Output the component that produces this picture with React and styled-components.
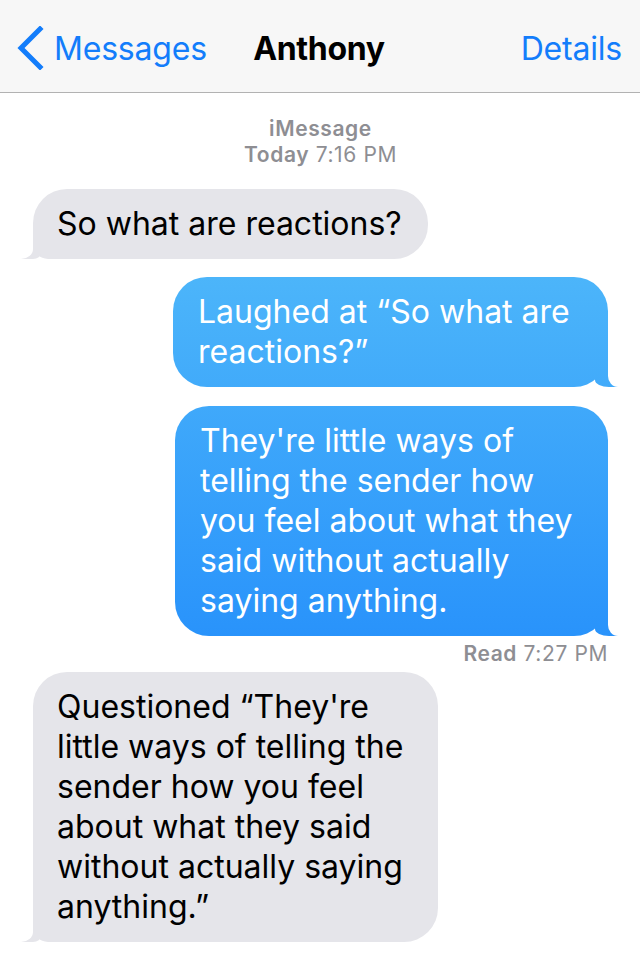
import styled, { createGlobalStyle, css } from "styled-components";

const GlobalStyle = createGlobalStyle`
  html, body {
    margin: 0;
    padding: 0;
    background: #ffffff;
  }
  body {
    font-family: Inter, "Noto Sans", "Liberation Sans", sans-serif;
    -webkit-font-smoothing: antialiased;
  }
`;

const Screen = styled.div`
  width: 640px;
  min-height: 977px;
  background: #ffffff;
  overflow: hidden;
`;

const NavBar = styled.div`
  height: 93px;
  display: grid;
  grid-template-columns: 1fr auto 1fr;
  align-items: center;
  padding: 4px 18px 0 16px;
  box-sizing: border-box;
  background: #f7f7f7;
  border-bottom: 1px solid #b2b2b2;
`;

const BackButton = styled.div`
  display: flex;
  align-items: center;
  gap: 10px;
  color: #137dfb;
  font-size: 32px;
  letter-spacing: -0.2px;
`;

const Title = styled.div`
  font-size: 32px;
  font-weight: 700;
  color: #000;
  letter-spacing: -0.3px;
`;

const NavAction = styled.div`
  justify-self: end;
  color: #137dfb;
  font-size: 32px;
  letter-spacing: -0.2px;
`;

const Thread = styled.div`
  display: flex;
  flex-direction: column;
  padding: 23px 32px 0 33px;
`;

const Meta = styled.div`
  color: #8e8e93;
  font-size: 21px;
  line-height: 26px;
  letter-spacing: 0.6px;
  text-align: ${(p) => (p.$right ? "right" : "center")};
  margin: ${(p) => p.$margin || "0"};
`;

const Strong = styled.span`
  font-weight: 600;
`;

const blueFill = css`
  background: linear-gradient(
    to bottom,
    #5bbff9 0px,
    #4cb5fa 277px,
    #2993fb 636px,
    #1f8cfb 977px
  );
  background-attachment: fixed;
  color: #ffffff;
`;

const grayFill = css`
  background: #e5e5ea;
  color: #000000;
`;

const sentTail = css`
  border-radius: 34px;

  &::before {
    right: -10px;
    width: 23px;
    height: 34px;
    border-bottom-left-radius: 14px 7px;
  }

  &::after {
    right: -16px;
    width: 16px;
    height: 38px;
    border-bottom-left-radius: 10px 11px;
  }
`;

const receivedTail = css`
  border-radius: 34px 34px 34px 15px;

  &::before {
    left: -12px;
    width: 20px;
    height: 26px;
    border-bottom-right-radius: 8px 6px;
  }

  &::after {
    left: -17px;
    width: 17px;
    height: 30px;
    border-bottom-right-radius: 12px 10px;
  }
`;

const Bubble = styled.div`
  position: relative;
  box-sizing: border-box;
  width: ${(p) => p.$w}px;
  padding: 15px 20px 15px ${(p) => (p.$sent ? 25 : 24)}px;
  font-size: 32px;
  line-height: 40px;
  align-self: ${(p) => (p.$sent ? "flex-end" : "flex-start")};
  margin-top: ${(p) => p.$top || 0}px;
  ${(p) => (p.$sent ? blueFill : grayFill)}

  &::before {
    content: "";
    position: absolute;
    bottom: 0;
    background: inherit;
  }

  &::after {
    content: "";
    position: absolute;
    bottom: 0;
    background: #ffffff;
  }

  ${(p) => (p.$sent ? sentTail : receivedTail)}
`;

const Line = styled.span`
  position: relative;
  z-index: 1;
  display: block;
  white-space: nowrap;
`;

const Chevron = () => (
  <svg width="28" height="44" viewBox="0 0 28 44">
    <path
      d="M24 3 L5 22 L24 41"
      fill="none"
      stroke="#137dfb"
      strokeWidth="5"
      strokeLinecap="square"
    />
  </svg>
);

const messages = [
  { sent: false, w: 395, top: 21, lines: ["So what are reactions?"] },
  {
    sent: true,
    w: 435,
    top: 18,
    lines: ["Laughed at \u201cSo what are", "reactions?\u201d"],
  },
  {
    sent: true,
    w: 433,
    top: 19,
    lines: [
      "They're little ways of",
      "telling the sender how",
      "you feel about what they",
      "said without actually",
      "saying anything.",
    ],
  },
];

const lastMessage = {
  sent: false,
  w: 405,
  lines: [
    "Questioned \u201cThey're",
    "little ways of telling the",
    "sender how you feel",
    "about what they said",
    "without actually saying",
    "anything.\u201d",
  ],
};

function Message({ m }) {
  return (
    <Bubble $sent={m.sent} $w={m.w} $top={m.top}>
      {m.lines.map((l, i) => (
        <Line key={i}>{l}</Line>
      ))}
    </Bubble>
  );
}

export default function App() {
  return (
    <Screen>
      <GlobalStyle />
      <NavBar>
        <BackButton>
          <Chevron />
          Messages
        </BackButton>
        <Title>Anthony</Title>
        <NavAction>Details</NavAction>
      </NavBar>
      <Thread>
        <Meta>
          <Strong>iMessage</Strong>
        </Meta>
        <Meta>
          <Strong>Today</Strong> 7:16 PM
        </Meta>
        {messages.map((m, i) => (
          <Message key={i} m={m} />
        ))}
        <Meta $right $margin="5px 0 5px">
          <Strong>Read</Strong> 7:27 PM
        </Meta>
        <Message m={lastMessage} />
      </Thread>
    </Screen>
  );
}
